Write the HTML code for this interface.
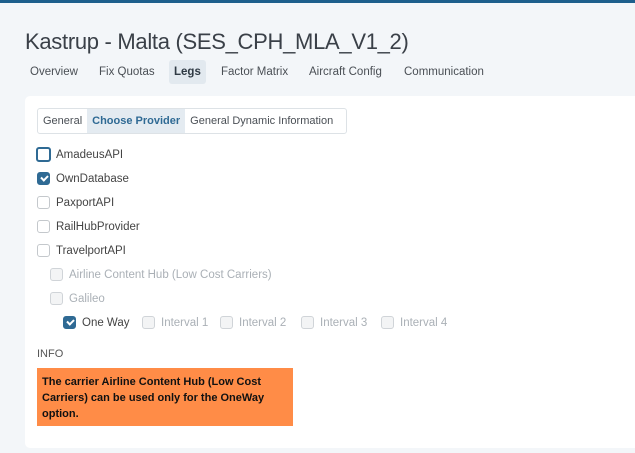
<!DOCTYPE html>
<html><head><style>
*{box-sizing:border-box;margin:0;padding:0}
body{width:635px;height:453px;overflow:hidden;background:#f3f6f9;font-family:"Liberation Sans",sans-serif;position:relative;color:#444}
.top{position:absolute;left:0;top:0;width:635px;height:3px;background:#1d5f8c}
h1{position:absolute;left:25px;top:29px;font-size:22px;font-weight:normal;color:#3a4048;white-space:nowrap;letter-spacing:-0.3px}
.tab{position:absolute;top:60px;height:24px;line-height:24px;font-size:11.5px;color:#4a4f55;padding:0 5px;white-space:nowrap}
.tab.a{background:#e2e9ef;font-weight:bold;color:#2f3a44;border-radius:3px}
.card{position:absolute;left:25px;top:96px;width:640px;height:352px;background:#fff;border-radius:5px}
.sub{position:absolute;left:37px;top:108px;height:26px;width:310px;border:1px solid #dde2e6;border-radius:3px;font-size:11px;display:flex;white-space:nowrap;overflow:hidden}
.sub span{line-height:24px;padding:0 5px;color:#4a4f55}
.sub span.a{background:#e4ebf1;color:#2f6a94;font-weight:bold}
.cb{position:absolute;height:14px;font-size:11.5px;line-height:14px;white-space:nowrap;color:#444}
.cb i{position:absolute;left:0;top:0;width:13px;height:13px;border:1px solid #c4c8cc;border-radius:3px;background:#fff}
.cb span{position:absolute;left:19px;top:0}
.cb.d{color:#aab0b6}.cb.d i{background:#f3f4f5;border-color:#d0d4d8}
.cb.c i{background:#2f6a94;border-color:#2f6a94}
.cb.c i:after{content:"";position:absolute;left:3px;top:2px;width:5px;height:3px;border-left:2px solid #fff;border-bottom:2px solid #fff;transform:rotate(-45deg)}
.cb.f i{border:2px solid #2f6a94;width:15px;height:15px;left:-1px;top:-1px}
.info{position:absolute;left:37px;top:348px;font-size:11px;color:#555}
.warn{position:absolute;left:37px;top:368px;width:256px;height:58px;background:#ff8c47;font-size:11px;font-weight:bold;color:#111;padding:6px 5px;line-height:16px}
</style></head><body>
<div class="top"></div>
<h1>Kastrup - Malta (SES_CPH_MLA_V1_2)</h1>
<div class="tab" style="left:25px">Overview</div>
<div class="tab" style="left:94px">Fix Quotas</div>
<div class="tab a" style="left:169px">Legs</div>
<div class="tab" style="left:216px">Factor Matrix</div>
<div class="tab" style="left:304px">Aircraft Config</div>
<div class="tab" style="left:399px">Communication</div>
<div class="card"></div>
<div class="sub"><span>General</span><span class="a">Choose Provider</span><span>General Dynamic Information</span></div>
<div class="cb f" style="left:37px;top:148px"><i></i><span>AmadeusAPI</span></div>
<div class="cb c" style="left:37px;top:172px"><i></i><span>OwnDatabase</span></div>
<div class="cb" style="left:37px;top:196px"><i></i><span>PaxportAPI</span></div>
<div class="cb" style="left:37px;top:220px"><i></i><span>RailHubProvider</span></div>
<div class="cb" style="left:37px;top:244px"><i></i><span>TravelportAPI</span></div>
<div class="cb d" style="left:50px;top:268px"><i></i><span>Airline Content Hub (Low Cost Carriers)</span></div>
<div class="cb d" style="left:50px;top:292px"><i></i><span>Galileo</span></div>
<div class="cb c" style="left:63px;top:316px"><i></i><span>One Way</span></div>
<div class="cb d" style="left:142px;top:316px"><i></i><span>Interval 1</span></div>
<div class="cb d" style="left:220px;top:316px"><i></i><span>Interval 2</span></div>
<div class="cb d" style="left:301px;top:316px"><i></i><span>Interval 3</span></div>
<div class="cb d" style="left:381px;top:316px"><i></i><span>Interval 4</span></div>
<div class="info">INFO</div>
<div class="warn">The carrier Airline Content Hub (Low Cost Carriers) can be used only for the OneWay option.</div>
</body></html>
